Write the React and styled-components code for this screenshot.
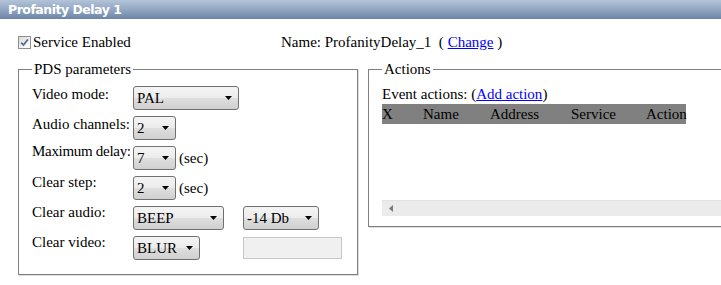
import React from 'react';
import styled, { createGlobalStyle } from 'styled-components';

const Global = createGlobalStyle`
  html, body { margin: 0; padding: 0; background: #fff; overflow: hidden; }
  body {
    font-family: "Liberation Serif", "Times New Roman", serif;
    font-size: 15px;
    line-height: 17px;
    color: #000;
  }
`;

const Page = styled.div`
  width: 721px;
  height: 285px;
  overflow: hidden;
`;

const Header = styled.div`
  height: 19px;
  display: flex;
  align-items: center;
  padding-left: 8px;
  background: linear-gradient(to bottom, #b3c3d8 0%, #96aac5 45%, #6b84a7 100%);
  color: #fff;
  font-family: "DejaVu Sans", Verdana, sans-serif;
  font-weight: bold;
  font-size: 12.5px;
  letter-spacing: -0.5px;
`;

const TopRow = styled.div`
  display: grid;
  grid-template-columns: 263px auto;
  margin-top: 15px;
  padding-left: 18px;
`;

const CheckLabel = styled.label`
  display: flex;
  align-items: center;
  gap: 2px;
`;

const CheckBox = styled.span`
  width: 13px;
  height: 13px;
  box-sizing: border-box;
  border: 1px solid #8e8f8f;
  background: linear-gradient(135deg, #d9d9d9 0%, #f6f6f6 70%, #ffffff 100%);
  display: inline-flex;
  align-items: center;
  justify-content: center;
`;

const Link = styled.a`
  color: #0000ff;
  text-decoration: underline;
  cursor: pointer;
`;

const Groups = styled.div`
  display: flex;
  gap: 10px;
  padding-left: 18px;
  margin-top: 10px;
  align-items: flex-start;
`;

const Group = styled.fieldset`
  margin: 0;
  min-width: 0;
  box-sizing: border-box;
  flex: none;
  width: ${p => p.$w}px;
  border: 1px solid #7f7f7f;
  box-shadow: 1px 1px 0 #dcdcdc;
  padding: 8px 13px ${p => p.$pb}px 13px;
`;

const Legend = styled.legend`
  padding: 0 2px;
`;

const FormGrid = styled.div`
  display: grid;
  grid-template-columns: 101px 110px auto;
  grid-auto-rows: 30px;
  align-items: start;
`;

const Label = styled.div`
  white-space: nowrap;
  margin-top: ${p => p.$nudge || 0}px;
  letter-spacing: ${p => p.$tight ? '-0.3px' : 'normal'};
`;

const Control = styled.div`
  display: flex;
  align-items: center;
  gap: 3px;
  height: 24px;
`;

const SelectBox = styled.div`
  box-sizing: border-box;
  width: ${p => p.$w}px;
  height: 24px;
  border: 1px solid #707070;
  border-radius: 3px;
  background: linear-gradient(to bottom, #f4f4f4 0%, #ececec 48%, #dedede 52%, #d0d0d0 100%);
  display: flex;
  align-items: center;
  justify-content: space-between;
  padding: 0 6px 0 3px;
  white-space: nowrap;
`;

const TextField = styled.div`
  box-sizing: border-box;
  width: 99px;
  height: 22px;
  border: 1px solid #c8c8c8;
  background: #f0f0f0;
`;

const EventLine = styled.div`
  white-space: nowrap;
`;

const ScrollArea = styled.div`
  height: 112px;
  margin-top: 1px;
  display: flex;
  flex-direction: column;
  justify-content: space-between;
`;

const HeadRow = styled.div`
  width: 304px;
  height: 20px;
  display: grid;
  grid-template-columns: 41px 67px 81px 75px 40px;
  align-items: center;
  background: #808080;
  white-space: nowrap;
`;

const ScrollBar = styled.div`
  height: 16px;
  box-sizing: border-box;
  background: #ebebeb;
  border-top: 1px solid #e3e3e3;
  display: flex;
  align-items: center;
  padding-left: 7px;
`;

const Arrow = () => (
  <svg width="7" height="4" viewBox="0 0 7 4">
    <polygon points="0,0 7,0 3.5,4" fill="#000" />
  </svg>
);

const Select = ({ w, value }) => (
  <SelectBox $w={w}>
    <span>{value}</span>
    <Arrow />
  </SelectBox>
);

export default function App() {
  return (
    <Page>
      <Global />
      <Header>Profanity Delay 1</Header>
      <TopRow>
        <CheckLabel>
          <CheckBox>
            <svg width="9" height="9" viewBox="0 0 9 9">
              <path d="M1.2 4.6 L3.5 7 L7.9 1.4" fill="none" stroke="#4f6a9e" strokeWidth="1.7" />
            </svg>
          </CheckBox>
          Service Enabled
        </CheckLabel>
        <div>
          Name: ProfanityDelay_1 &nbsp;( <Link>Change</Link> )
        </div>
      </TopRow>
      <Groups>
        <Group $w={340} $pb={8}>
          <Legend>PDS parameters</Legend>
          <FormGrid>
            <Label>Video mode:</Label>
            <Control><Select w={106} value="PAL" /></Control>
            <div />

            <Label>Audio channels:</Label>
            <Control><Select w={43} value="2" /></Control>
            <div />

            <Label $nudge={-3} $tight>Maximum delay:</Label>
            <Control><Select w={43} value="7" /><span>(sec)</span></Control>
            <div />

            <Label $nudge={-2}>Clear step:</Label>
            <Control><Select w={43} value="2" /><span>(sec)</span></Control>
            <div />

            <Label $nudge={-2}>Clear audio:</Label>
            <Control><Select w={91} value="BEEP" /></Control>
            <Control><Select w={76} value="-14 Db" /></Control>

            <Label $nudge={-2}>Clear video:</Label>
            <Control><Select w={67} value="BLUR" /></Control>
            <Control><TextField /></Control>
          </FormGrid>
        </Group>
        <Group $w={420} $pb={10}>
          <Legend>Actions</Legend>
          <EventLine>
            Event actions: (<Link>Add action</Link>)
          </EventLine>
          <ScrollArea>
            <HeadRow>
              <span>X</span>
              <span>Name</span>
              <span>Address</span>
              <span>Service</span>
              <span>Action</span>
            </HeadRow>
            <ScrollBar>
              <svg width="4" height="7" viewBox="0 0 4 7">
                <polygon points="4,0 4,7 0,3.5" fill="#7a7a7a" />
              </svg>
            </ScrollBar>
          </ScrollArea>
        </Group>
      </Groups>
    </Page>
  );
}
